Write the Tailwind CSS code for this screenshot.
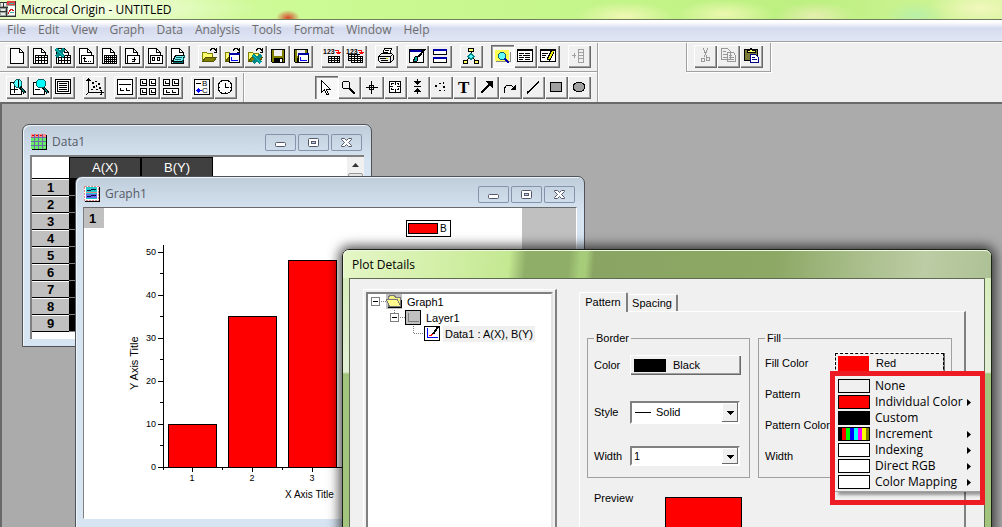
<!DOCTYPE html>
<html lang="en">
<head>
  <meta charset="UTF-8" />
  <meta name="viewport" content="width=device-width, initial-scale=1.0" />
  <title>Microcal Origin - UNTITLED</title>
  <script src="https://cdn.jsdelivr.net/npm/@tailwindcss/browser@4"></script>
</head>
<body class="h-screen overflow-hidden flex flex-col bg-[#f0f0f0] text-black font-['Open_Sans','Noto_Sans',sans-serif] text-[12px]">

  <svg class="hidden">
    <symbol id="min" viewBox="0 0 31 17"><rect x="10.5" y="8.5" width="10" height="4" rx="1" fill="#fff" stroke="#54586e" /></symbol>
    <symbol id="max" viewBox="0 0 31 17">
      <rect x="10.5" y="4.5" width="10" height="8" rx="1" fill="#fff" stroke="#54586e" />
      <rect x="13.5" y="7.5" width="4" height="2" fill="#c3d1e0" stroke="#54586e" />
    </symbol>
    <symbol id="close" viewBox="0 0 31 17">
      <path d="M10.5 4.5h3l2 2 2-2h3v1l-3 3 3 3v1h-3l-2-2-2 2h-3v-1l3-3-3-3z" fill="#fff" stroke="#54586e" />
    </symbol>
  </svg>

  <!-- title bar -->
  <header class="h-5 shrink-0 flex items-center gap-[5px] border-b border-[#6f7d5c] bg-[radial-gradient(ellipse_12px_8px_at_288px_18px,#d8472c,transparent),radial-gradient(ellipse_170px_24px_at_90px_8px,#f8ffe8,transparent),radial-gradient(ellipse_50px_14px_at_625px_16px,#f0f8b4,transparent),radial-gradient(ellipse_50px_14px_at_725px_14px,#ecf8b0,transparent),radial-gradient(ellipse_40px_14px_at_815px_16px,#e6eeb0,transparent),radial-gradient(ellipse_30px_14px_at_915px_16px,#b8f0a8,transparent),radial-gradient(ellipse_50px_20px_at_980px_8px,#f2f8bc,transparent),linear-gradient(90deg,#d8f8a8,#ccfa94_30%,#c4f58a_60%,#bcf080_80%,#d4f49c)]">
    <svg class="w-4 h-5" viewBox="0 0 16 20" shape-rendering="crispEdges">
      <rect y="2" width="15" height="14" fill="#9aa49a" />
      <path d="M7 1h8v4H7z" fill="#e04040" /><path d="M8 6h7v9H8z" fill="#fff" />
      <path d="M1 3h2v3H1zM4 3h2v3H4zM1 9h4v2H1zM1 13h4v2H1z" fill="#e8ece8" />
      <path d="M0 2.5h7M0 7.5h8M3.5 2v5M6.5 8v8M15.5 1v15M0 16.5h16M0 11.5h6" stroke="#333" fill="none" />
      <path d="M8 14l3-5 3 2" stroke="#d02020" fill="none" /><path d="M9 3.5h5M10 12.5h4" stroke="#40b0a0" />
    </svg>
    <h1>Microcal Origin - UNTITLED</h1>
  </header>

  <nav class="h-[22px] shrink-0 flex items-center gap-3 pl-[7px] pb-[2px] text-[#6d6d6d] border-b border-[#a0a0a0] bg-linear-to-b from-white from-10% via-[#d5dbee] via-40% to-[#e2e7f6]">
    <button>File</button><button>Edit</button><button>View</button><button>Graph</button><button>Data</button>
    <button>Analysis</button><button>Tools</button><button>Format</button><button>Window</button><button>Help</button>
  </nav>

  <!-- toolbars -->
  <section class="h-[60px] shrink-0 flex items-start border-t border-white">
    <div class="w-[598px] h-[60px] border-r border-[#a0a0a0] shadow-[1px_0_#fff]">
      <div id="bar1" class="h-[29px] flex gap-2 pt-[2px] pl-[6px] border-b border-[#a0a0a0]"></div>
      <div class="h-[30px] flex border-t border-white">
        <div id="bar2" class="w-[244px] h-full flex gap-2 pt-[3px] pl-[6px] border-r border-[#a0a0a0]"></div>
        <div id="bar3" class="flex pt-[3px] pl-[70px] border-l border-white"></div>
      </div>
    </div>
    <div id="bar4" class="ml-[88px] h-[29px] w-[85px] flex pt-[2px] pl-[7px] border-x border-b border-[#a0a0a0] shadow-[1px_1px_#fff,inset_1px_0_#fff]"></div>
  </section>

  <main class="relative flex-1 overflow-hidden bg-[#ababab] border-t-2 border-l-2 border-[#696969]">

    <!-- worksheet -->
    <section class="absolute left-[20px] top-[20px] w-[350px] h-[223px] flex flex-col px-[7px] pb-[7px] border border-[#4f5358] rounded-t-[7px] bg-linear-to-b from-[#bfccda] to-[#d7e4f2] to-[36px] shadow-[inset_1px_1px_#eef4fa]">
      <div class="h-[30px] shrink-0 flex items-center gap-[2px] pt-[4px] pr-[2px]">
        <svg class="w-[18px] h-[18px]" viewBox="0 0 18 18" shape-rendering="crispEdges">
          <path d="M2 2h15v15H2z" fill="#000" /><path d="M1 1h15v15H1z" fill="#fff" />
          <path d="M1 1h15v3H1z" fill="#f88" /><path d="M2 2h2v1H2zM6 2h2v1H6zM10 2h2v1h-2z" fill="#d00" />
          <path d="M1 5h15v11H1z" fill="#6e6" />
          <path d="M4.5 1v15M8.5 1v15M12.5 1v15M1 4.500h15M1 8.5h15M1 12.5h15" stroke="#6a6aa8" />
        </svg>
        <h2 class="flex-1 pl-[2px] text-[#555b66]">Data1</h2>
        <button aria-label="Minimize" class="w-[31px] h-[17px] rounded-[2px] shadow-[inset_0_0_0_1px_#8494ac]"><svg class="w-[31px] h-[17px]"><use href="#min" /></svg></button>
        <button aria-label="Maximize" class="w-[31px] h-[17px] rounded-[2px] shadow-[inset_0_0_0_1px_#8494ac]"><svg class="w-[31px] h-[17px]"><use href="#max" /></svg></button>
        <button aria-label="Close" class="w-[31px] h-[17px] rounded-[2px] shadow-[inset_0_0_0_1px_#8494ac]"><svg class="w-[31px] h-[17px]"><use href="#close" /></svg></button>
      </div>
      <div class="flex-1 flex justify-between overflow-hidden bg-white border-t-2 border-l-2 border-[#808080]">
        <table class="self-start w-[181px] table-fixed border-separate border-spacing-0 font-['Liberation_Sans',Arial,sans-serif]">
          <thead>
            <tr class="h-[20px] text-[13px] text-white">
              <td class="w-[37px] border-b border-black"></td>
              <th class="p-0 bg-[#404040] border border-black font-normal">A(X)</th>
              <th class="p-0 bg-[#404040] border border-black font-normal">B(Y)</th>
            </tr>
          </thead>
          <tbody id="rows"></tbody>
        </table>
        <div class="w-[17px] bg-[#f0f0f0] flex flex-col items-center">
          <button aria-label="Scroll up" class="h-[16px] w-full flex items-center justify-center"><svg class="w-[7px] h-[4px]" viewBox="0 0 7 4"><path d="M3.5 0L7 4H0z" fill="#333" /></svg></button>
          <div class="w-[15px] h-[60px] bg-[#e4e4e4] border border-[#999] rounded-[2px]"></div>
        </div>
      </div>
    </section>

    <!-- graph -->
    <section class="absolute left-[73px] top-[72px] w-[510px] h-[353px] flex flex-col px-[7px] pb-[7px] border border-[#4f5358] rounded-t-[7px] bg-linear-to-b from-[#bfccda] to-[#d7e4f2] to-[36px] shadow-[inset_1px_1px_#eef4fa]">
      <div class="h-[30px] shrink-0 flex items-center gap-[2px] pt-[4px] pr-[2px]">
        <svg class="w-[18px] h-[18px]" viewBox="0 0 18 18" shape-rendering="crispEdges">
          <path d="M2 2h15v15H2z" fill="#000" /><path d="M1 1h15v15H1z" fill="#fff" />
          <path d="M1.5 1.5h14v14h-14z" stroke="#d88" stroke-dasharray="2 1" fill="none" />
          <path d="M3 2h11v12H3z" fill="#2cc" /><path d="M3 9h11v4H3z" fill="#66e" />
          <path d="M4 5.5h3l2-1h4M4 11.5h3l2-1h4" stroke="#013" fill="none" /><path d="M3 7.5h11" stroke="#d88" />
        </svg>
        <h2 class="flex-1 pl-[2px] text-[#555b66]">Graph1</h2>
        <button aria-label="Minimize" class="w-[31px] h-[17px] rounded-[2px] shadow-[inset_0_0_0_1px_#8494ac]"><svg class="w-[31px] h-[17px]"><use href="#min" /></svg></button>
        <button aria-label="Maximize" class="w-[31px] h-[17px] rounded-[2px] shadow-[inset_0_0_0_1px_#8494ac]"><svg class="w-[31px] h-[17px]"><use href="#max" /></svg></button>
        <button aria-label="Close" class="w-[31px] h-[17px] rounded-[2px] shadow-[inset_0_0_0_1px_#8494ac]"><svg class="w-[31px] h-[17px]"><use href="#close" /></svg></button>
      </div>
      <div class="flex-1 mb-[2px] overflow-hidden bg-[#c0c0c0] border border-t-[#696969] border-l-[#808080] border-white">
        <svg class="w-[438px] h-full bg-white font-['Liberation_Sans',Arial,sans-serif]" viewBox="0 0 438 310" preserveAspectRatio="xMinYMin slice">
          <rect width="20" height="20" fill="#c0c0c0" />
          <text x="5" y="15" font-size="13" font-weight="bold">1</text>
          <g shape-rendering="crispEdges" stroke="#000" fill="red">
            <rect x="322.5" y="12.5" width="44" height="16" fill="#fff" />
            <rect x="324.5" y="15.5" width="29" height="10" />
            <rect x="84.5" y="216.5" width="48" height="43" />
            <rect x="144.5" y="108.5" width="48" height="151" />
            <rect x="204.5" y="52.5" width="48" height="207" />
            <path fill="none" d="M79.5 37v225M74 259.5h250M74 44.5h5M74 87.5h5M74 130.5h5M74 173.5h5M74 216.5h5M76 65.5h3M76 108.5h3M76 151.5h3M76 194.5h3M76 237.5h3M108.5 260v4M168.5 260v4M228.5 260v4M138.5 260v2M198.5 260v2" />
          </g>
          <g font-size="9" text-anchor="end">
            <text x="72" y="47">50</text><text x="72" y="90">40</text><text x="72" y="133">30</text>
            <text x="72" y="176">20</text><text x="72" y="219">10</text><text x="72" y="262">0</text>
          </g>
          <g font-size="9" text-anchor="middle">
            <text x="108" y="273">1</text><text x="168" y="273">2</text><text x="228" y="273">3</text>
          </g>
          <text x="356" y="24" font-size="10">B</text>
          <text x="201" y="290" font-size="10">X Axis Title</text>
          <text transform="translate(54 182) rotate(-90)" font-size="11">Y Axis Title</text>
        </svg>
      </div>
    </section>

    <!-- plot details dialog -->
    <section class="absolute left-[340px] right-[10px] top-[145px] h-[400px] flex flex-col px-[6px] border border-[#1c2416] rounded-t-[7px] bg-linear-to-b from-[#d4ecb4] via-[#e2efd6] via-[122px] to-[#a2c47c] to-[124px] shadow-[0_0_12px_3px_#000000b0]">
      <h2 class="h-[28px] -mx-[6px] pl-[8px] shrink-0 flex items-center rounded-t-[6px] border-t border-l border-[#f0f8e4] bg-[linear-gradient(95deg,#e4f6c6,#d2efa6_100px,#c4e892_165px,#8fae68_182px,#8fae68_225px,#a6cc7a_236px,#a6cc7a_242px,#8aa563_250px,#8ca864_430px,#a8bd8a_510px,#bccca4_580px,#aec196)]">Plot Details</h2>
      <div class="flex-1 flex justify-between pt-[10px] pl-[13px] pr-[18px] border border-[#5f6b50] bg-[#f0f0f0] font-['Liberation_Sans',Arial,sans-serif] text-[11px]">

        <div class="w-[194px] p-[2px] border-t border-l border-t-white border-l-white border-r-2 border-r-[#808080]">
          <ul class="h-full bg-white border-2 border-[#808080] border-r-[#e3e3e3] pl-[3px]">
            <li class="flex items-center h-4">
              <svg class="w-[33px] h-4" viewBox="0 0 33 16" shape-rendering="crispEdges">
                <path d="M.5 3.5h8v8h-8z" fill="#fff" stroke="#808080" /><path d="M2 7.5h5" stroke="#000" /><path d="M10 7.5h6" stroke="#808080" stroke-dasharray="1 1" />
                <rect x="15" width="16" height="15" fill="#c0c0c0" />
                <path d="M17.5 12.5v-9l1-2h5l1 2h5v9z" fill="#f4f080" stroke="#777" /><path d="M15.5 5.5h11l3 7h-11z" fill="#fff88c" stroke="#777" /><path d="M17 13.5h13.5v-8" stroke="#000" fill="none" />
              </svg>
              <span class="pl-[3px]">Graph1</span>
            </li>
            <li class="flex items-center h-4 pl-[19px]">
              <svg class="w-[33px] h-4" viewBox="0 0 33 16" shape-rendering="crispEdges">
                <path d="M.5 3.5h8v8h-8z" fill="#fff" stroke="#808080" /><path d="M2 7.5h5" stroke="#000" /><path d="M10 7.5h6M4.5 0v3" stroke="#808080" stroke-dasharray="1 1" />
                <rect x="15.5" y=".5" width="15" height="14" fill="#c0c0c0" stroke="#000" /><path d="M18.5 3v8.5h10" stroke="#808080" fill="none" />
              </svg>
              <span class="pl-[3px]">Layer1</span>
            </li>
            <li class="flex items-center h-4 pl-[38px]">
              <svg class="w-[33px] h-4" viewBox="0 0 33 16" shape-rendering="crispEdges">
                <path d="M4.5 0v7.5h11" stroke="#808080" stroke-dasharray="1 1" fill="none" />
                <rect x="15.5" y=".5" width="15" height="14" fill="#fff" stroke="#000" /><path d="M18.5 2v9.5h10" stroke="#00f" fill="none" />
                <path d="M20 9.5h2l2-2h2" stroke="red" fill="none" /><path d="M29 1l-5 7" stroke="#000" stroke-width="2" />
              </svg>
              <span class="ml-[1px] px-[2px] bg-[#f0f0f0]">Data1 : A(X), B(Y)</span>
            </li>
          </ul>
        </div>

        <div class="w-[387px] pt-[3px] flex flex-col">
          <div class="flex items-end h-[19px]" role="tablist">
            <button role="tab" aria-selected="true" class="w-[49px] h-[20px] -mb-[1px] relative bg-[#f0f0f0] border-t border-l border-white border-r-2 border-r-[#808080] rounded-t-[2px]">Pattern</button>
            <button role="tab" class="w-[50px] h-[17px] border-t border-white border-r-2 border-r-[#808080] rounded-t-[2px]">Spacing</button>
          </div>
          <div class="flex-1 pt-[18px] pl-[7px] border-t border-l border-white border-r-2 border-r-[#808080]">
            <div class="flex gap-2">
              <fieldset class="w-[163px] h-[148px] pl-[6px] border border-[#a0a0a0]">
                <legend class="h-4 leading-4 px-[2px]">Border</legend>
                <div class="flex items-center h-[20px] mt-[9px]">
                  <label for="bcolor" class="w-[36px]">Color</label>
                  <button id="bcolor" class="w-[111px] h-[20px] flex items-center gap-[7px] pl-1 shadow-[inset_1px_1px_#fff,inset_-1px_-1px_#696969,inset_-2px_-2px_#a0a0a0]"><span class="w-8 h-[13px] bg-black"></span>Black</button>
                </div>
                <div class="relative flex items-center h-[23px] mt-[26px]">
                  <label for="bstyle" class="w-[36px]">Style</label>
                  <select id="bstyle" class="appearance-none w-[110px] h-[23px] pl-[24px] bg-white border-2 border-[#808080] border-r-white border-b-white"><option>Solid</option></select>
                  <svg class="absolute left-[41px] w-[16px] h-[1px] pointer-events-none"><path d="M0 .5h16" stroke="#000" /></svg>
                  <svg class="absolute left-[128px] w-[16px] h-[19px] pointer-events-none" shape-rendering="crispEdges"><path d="M0 0h16v19H0z" fill="#696969" /><path d="M0 0h15v18H0z" fill="#fff" /><path d="M1 1h14v17H1z" fill="#f0f0f0" /><path d="M5 8h7L8.5 12z" /></svg>
                </div>
                <div class="relative flex items-center h-[20px] mt-[22px]">
                  <label for="bwidth" class="w-[36px]">Width</label>
                  <select id="bwidth" class="appearance-none w-[110px] h-[20px] pl-[2px] bg-white border-2 border-[#808080] border-r-white border-b-white"><option>1</option></select>
                  <svg class="absolute left-[128px] w-[16px] h-[16px] pointer-events-none" shape-rendering="crispEdges"><path d="M0 0h16v16H0z" fill="#696969" /><path d="M0 0h15v15H0z" fill="#fff" /><path d="M1 1h14v14H1z" fill="#f0f0f0" /><path d="M5 7h7L8.5 11z" /></svg>
                </div>
              </fieldset>
              <fieldset class="w-[194px] h-[148px] pl-[6px] border border-[#a0a0a0]">
                <legend class="h-4 leading-4 px-[2px]">Fill</legend>
                <div class="relative flex items-center h-[31px] mt-[2px]">
                  <label for="fcolor" class="w-[69px]">Fill Color</label>
                  <button id="fcolor" class="w-[111px] h-[23px] p-[1px] shadow-[inset_1px_1px_#fff,inset_-1px_-1px_#696969,inset_-2px_-2px_#a0a0a0]">
                    <span class="h-full flex items-center gap-[7px] pl-[2px] border border-dashed border-black"><span class="w-[31px] h-[15px] bg-[red]"></span>Red</span>
                  </button>
                  <!-- fill color popup -->
                  <div class="absolute left-[65px] top-[23px] z-10 w-[155px] h-[134px] border-5 border-[#ed1c24]">
                    <div id="menu" class="h-[116px] pt-[2px] bg-[#f0f0f0] border-b border-[#a0a0a0] shadow-[3px_3px_3px_#00000060] [clip-path:inset(0_0_-6px_0)] font-['Open_Sans','Noto_Sans',sans-serif] text-[12px]" role="menu"></div>
                  </div>
                </div>
                <div class="flex items-center h-[31px]"><label for="fpattern" class="w-[69px]">Pattern</label><select id="fpattern" class="w-[110px] h-[20px] bg-white"><option>None</option></select></div>
                <div class="flex items-center h-[31px]"><label for="fpcolor" class="w-[69px]">Pattern Color</label><select id="fpcolor" class="w-[110px] h-[20px] bg-white"><option>Black</option></select></div>
                <div class="flex items-center h-[31px]"><label for="fwidth" class="w-[69px]">Width</label><select id="fwidth" class="w-[110px] h-[20px] bg-white"><option>1</option></select></div>
              </fieldset>
            </div>
            <div class="flex pt-[19px] pl-[7px] leading-none">
              <span class="w-[71px] -mt-1">Preview</span>
              <div class="w-[77px] h-[80px] bg-[red] border border-black"></div>
            </div>
          </div>
        </div>
      </div>
    </section>
  </main>

  <script>
    // icons are drawn on the 23x23 button face
    const page = '<path d="M4.5 3.5h8l4 4v11h-12z" fill="#fff" stroke="#000"/><path d="M12.5 3.5v4h4" fill="none" stroke="#000"/>';
    const box = page + '<path d="M6.5 10.5h12v8h-12z" fill="#fff" stroke="#000"/>';
    const grid = box + '<path d="M6 12.5h12M6 15.5h12M9.5 10v8M12.5 10v8M15.5 10v8" stroke="#000"/>';
    const folder = '<path d="M4.5 16.5v-9h4l1 1h5v4" fill="#ffff70" stroke="#808000"/><path d="M4.5 16.5l3-4h11l-3 4z" fill="#808000" stroke="#555500"/><path d="M12 5.5l2-2h2l2 2M18.5 3v4h-3" fill="none" stroke="#000"/>';
    const excel = '<path d="M0 0l8 8M8 0l-8 8" stroke="#088" stroke-width="3"/><path d="M0 0l8 8" stroke="#0cc"/>';
    const plotBox = '<path d="M8.5 9.5h10v8h-10z" fill="#fff" stroke="#000"/><path d="M8 8.5h11" stroke="#00a" stroke-width="2"/><path d="M10.5 12v3.5h6" fill="none" stroke="#00f"/>';
    const floppy = '<path d="M4.5 4.5h13v13h-12l-1-1z" fill="#808000" stroke="#000"/><path d="M7 5h8v6H7z" fill="#f0f0f0"/><path d="M7 13h9v5H7z"/><path d="M13 14h2v3h-2z" fill="#fff"/>';
    // 1 2 3 as dots with a red arrow
    const ascii = '<text x="2" y="9" font-size="7" font-family="Liberation Sans" font-weight="bold">123</text><path d="M14 5.5h3v3M15 7.5h5M16 8.5h3" fill="none" stroke="red"/>';
    const table = '<path d="M7.5 11.5h11v6h-11z" fill="#fff"/><path d="M7 11.5h12M7 13.5h12M7 15.5h12M7 17.5h12M7.5 11v7M10.5 11v7M13.5 11v7M16.5 11v7M18.5 11v7" fill="none" stroke="#000"/>';
    const zoomPage = '<path d="M4.5 6.5h8l3 3v9h-11z" fill="#fff" stroke="#000"/><path d="M14 11l5 6" stroke="#000" stroke-width="3"/><path d="M15 12l4 5" stroke="#088"/>';
    const panel = '<path d="M3.5 3.5h15v15h-15z" fill="#fff" stroke="#000"/>';
    const L = (x, y) => `<path d="M${x}.5 ${y}v2.5h3" fill="none" stroke="#000"/>`;
    const R = (x, y, w, h) => `<path d="M${x}.5 ${y}.5h${w}v${h}h-${w}z" fill="#fff" stroke="#000"/>`;

    const icons = {
      'New project': '<path d="M4.5 3.5h9l4 4v11h-13z" fill="#fff" stroke="#000"/><path d="M13.5 3.5v4h4" fill="none" stroke="#000"/>',
      'New worksheet': grid,
      'New Excel': grid + `<g transform="translate(4 4)">${excel}</g>`,
      'New graph': box + '<path d="M9.5 12v4.5h2M8 13.5h3M13 16.5h1M15 16.5h1" fill="none" stroke="#000"/>',
      'New matrix': box + '<path d="M6 12.5h12M6 14.5h12M6 16.5h12M8.5 10v8M10.5 10v8M12.5 10v8M14.5 10v8M16.5 10v8" stroke="#000"/>',
      'New function': box + '<path d="M14 12.5h-1v4h-2M11 14.5h4" fill="none" stroke="#000"/>',
      'New layout': box + '<path d="M8.5 12.5h2v3h-2zM13.5 12.5h2v3h-2z" fill="none" stroke="#000"/>',
      'New notes': page + '<path d="M8.5 10.5h9l-2 6h-10z" fill="#7ee" stroke="#000"/><path d="M6 17.5h9l3-7M9 12.5h6M8 14.5h6" fill="none" stroke="#066"/>',
      'Open': folder,
      'Open template': folder + plotBox,
      'Open Excel': folder + `<g transform="translate(9 10)">${excel}</g>`,
      'Save': floppy,
      'Save template': floppy + plotBox,
      'Import ASCII': ascii + table,
      'Import multiple': ascii + table + '<path d="M4 9.5h12M4 11.5h3M4 13.5h3M4 15.5h3M4.5 9v7M7.5 9v2M10.5 9v2M13.5 9v2" fill="none" stroke="#000"/>',
      'Print': '<path d="M7.5 9.5l2-6h7l-2 6" fill="#fff" stroke="#000"/><path d="M10 5.5h4M9 7.5h4" stroke="#000"/><path d="M3.5 11.5l3-3h10l2 2v4l-3 3h-10l-2-2z" fill="#eee" stroke="#000"/><path d="M4 11.5h11l3-2M15.5 12v5M6 15.5h7M5 13.5h6" fill="none" stroke="#000"/><path d="M11 13.5h2" stroke="#cc0"/>',
      'Refresh': '<path d="M3.5 4.5h14v13h-14z" fill="#fff" stroke="#000"/><path d="M4 6h13" stroke="#00a" stroke-width="2"/><path d="M19 4l-7 8" stroke="#000" stroke-width="2"/><path d="M12 11l-1 5-4 1 2-5z" fill="#0aa" stroke="#000"/>',
      'Duplicate': '<path d="M4.5 4.5h13v5h-13zM4.5 12.5h13v5h-13z" fill="#fff" stroke="#000"/><path d="M4 5h14M4 13h14" stroke="#00a" stroke-width="2"/>',
      'Project explorer': '<path d="M11.500 6v5M9 13l-3 3M13 13l3 3" stroke="#000"/><path d="M8.5 3.5h5v3h-5zM3.5 15.5h4v3h-4zM14.5 15.5h4v3h-4z" fill="#ff6" stroke="#000"/><path d="M11 8.500l3 3-3 3-3-3z" fill="#5ff" stroke="#088"/>',
      'Results log': '<path d="M4 5h14v11H4z" fill="#ffff50"/><path d="M5 16.5h14v-10" fill="none" stroke="#888"/><circle cx="11" cy="11" r="3.5" fill="#6ff" stroke="#068"/><path d="M14 14l4 4" stroke="#00a" stroke-width="2"/>',
      'Script window': '<path d="M3.5 4.5h15v12h-15z" fill="#fff" stroke="#000"/><path d="M3 5h16" stroke="#000" stroke-width="2"/><path d="M5 8.5h5M11 8.5h5M5 10.5h3M9 10.5h7M5 12.5h5M11 12.5h5M5 14.5h4M11 14.5h5" stroke="#000"/>',
      'Code window': '<path d="M3.5 4.5h15v12h-15z" fill="#fff" stroke="#000"/><path d="M3 5h16" stroke="#000" stroke-width="2"/><path d="M5 8.5h6M5 10.5h4M5 12.5h3" stroke="#000"/><path d="M16 6l-5 9" stroke="#000" stroke-width="4"/><path d="M16 6l-4 8" stroke="#ee0" stroke-width="2"/>',
      'Add column': '<path d="M4 10.5h4M6.5 8v5M10.5 4.5h5v13h-5zM10 7.5h5M10 10.5h5M10 13.5h5" fill="none" stroke="#a0a0a0"/>',
      'Zoom in': zoomPage + '<circle cx="12" cy="7.5" r="4" fill="#5ff" stroke="#066"/><path d="M5 13.5h7M8.5 10v7M12 4v7" stroke="#000"/>',
      'Zoom out': zoomPage + '<circle cx="12" cy="7.5" r="4.5" fill="#0ff" stroke="#066"/><path d="M6 13.5h5" stroke="#000"/>',
      'Whole page': R(3, 3, 15, 14) + R(5, 5, 11, 10) + '<path d="M7 7.5h8M7 9.5h8M7 11.5h8M7 13.5h8" stroke="#000"/>',
      'Rescale': '<path d="M5.5 3v13.5h15M3.5 5l2-2 2 2M17.500 14l2 2.500-2 2.500M5 17l-2 2" fill="none" stroke="#000"/><path d="M9 6h2v2H9zM12 5h2v1h-2zM15 7h2v2h-2zM10 10h2v2h-2zM13 9h1v2h-1zM16 11h2v2h-2zM8 13h2v1H8zM13 13h2v1h-2z"/>',
      'Extract layers': panel + '<path d="M5 8.5h12" stroke="#000"/>' + L(6, 12) + L(12, 12),
      'Extract graphs': R(3, 3, 6, 6) + R(12, 3, 6, 6) + R(3, 12, 6, 6) + R(12, 12, 6, 6) + L(5, 5) + L(14, 5) + L(5, 14) + L(14, 14),
      'Merge': R(3, 3, 6, 6) + R(12, 3, 6, 6) + R(3, 12, 15, 6) + L(5, 5) + L(14, 5) + L(6, 14) + L(12, 14),
      'Legend': panel + '<path d="M5 7.5h5" stroke="#000"/><path d="M5 14.5h6M7.5 12v5M6 13.5h3M6 15.5h3" stroke="#00f"/><text x="11" y="10" font-size="8" font-family="Liberation Sans">B</text><text x="11" y="17" font-size="8" font-family="Liberation Sans">C</text>',
      'Date': '<circle cx="11" cy="11" r="7" fill="#fff" stroke="#000"/><path d="M11.5 7v4.5h3M11.5 4v1M11.5 16v1M5 11.5h1M16 11.5h1" fill="none" stroke="#000"/>',
      'Pointer': '<path d="M6.5 4.5v12l3-3 2 5h2l-2-5h4z" fill="#fff" stroke="#000"/>',
      'Zoom tool': '<circle cx="8" cy="9" r="4" fill="none" stroke="#000"/><path d="M11 12l6 6" stroke="#000" stroke-width="2"/>',
      'Screen reader': '<path d="M10.500 5v13M5 11.5h12M8.5 9.5h4v4h-4z" fill="none" stroke="#000"/>',
      'Data reader': R(5, 5, 11, 11) + '<path d="M11 5v4M11 13v3M5 10.5h4M13 10.5h3M7.5 9V7.500h2M14.500 9V7.500h-2M7.500 12v1.500h2M14.500 12v1.500h-2" fill="none" stroke="#000"/>',
      'Data selector': '<path d="M10.5 3v5M10.5 13v5M7 10.5h7" stroke="#000"/><path d="M7 5h7l-3.5 4zM7 16h7l-3.5-4z"/>',
      'Draw data': '<path d="M5 9h2v2H5zM9 7h2v1H9zM9 14h2v1H9zM13 6h1v2h-1zM13 10h2v2h-2zM14 14h1v1h-1z"/>',
      'Text': '<text x="5" y="17" font-size="17" font-weight="bold" font-family="Liberation Serif">T</text>',
      'Arrow': '<path d="M5 17l8-8" stroke="#000" stroke-width="2"/><path d="M17 5v8l-8-8z"/>',
      'Curved arrow': '<path d="M5 17v-4l3-4h4l2 2" fill="none" stroke="#000"/><path d="M17 8v6h-6z"/>',
      'Line': '<path d="M5 17L17 6" stroke="#000" stroke-width="1.5"/>',
      'Rectangle': '<path d="M5.5 6.5h11v9h-11z" fill="#a0a0a0" stroke="#000"/>',
      'Ellipse': '<ellipse cx="11" cy="11" rx="6" ry="4.5" fill="#a0a0a0" stroke="#000"/>',
      'Cut': '<path d="M9 3l4 9M14 3l-4 9" stroke="#999"/><circle cx="9" cy="15" r="2" fill="none" stroke="#999"/><circle cx="14" cy="14" r="2" fill="none" stroke="#999"/>',
      'Copy': '<path d="M4.5 3.5h6l3 3v8h-9zM10.5 7.5h6l2 3v6h-8z" fill="#f0f0f0" stroke="#999"/><path d="M6 6.5h3M6 9.5h4M6 12.5h4M12 10.5h3M12 12.5h5M12 14.5h5" stroke="#999"/>',
      'Paste': '<path d="M4.5 4.5h13v11h-13z" fill="#7c7c38" stroke="#000"/><path d="M7 5.5h2l2-2 2 2h2v2H7z" fill="#ff6" stroke="#000"/><path d="M10.5 9.5h5l3 3v5h-8z" fill="#fff" stroke="#008"/><path d="M12 12.5h3M12 14.5h5" stroke="#008"/>'
    };

    const bars = {
      bar1: [
        ['New project', 'New worksheet', 'New Excel', 'New graph', 'New matrix', 'New function', 'New layout', 'New notes'],
        ['Open', 'Open template', 'Open Excel', 'Save', 'Save template'],
        ['Import ASCII', 'Import multiple'], ['Print'], ['Refresh', 'Duplicate'], ['Project explorer'],
        ['Results log', 'Script window', 'Code window'], ['Add column']
      ],
      bar2: [['Zoom in', 'Zoom out', 'Whole page'], ['Rescale'], ['Extract layers', 'Extract graphs', 'Merge'], ['Legend', 'Date']],
      bar3: [['Pointer', 'Zoom tool', 'Screen reader', 'Data reader', 'Data selector', 'Draw data', 'Text', 'Arrow', 'Curved arrow', 'Line', 'Rectangle', 'Ellipse']],
      bar4: [['Cut', 'Copy', 'Paste']]
    };
    const pressed = ['Results log', 'Pointer'];
    const up = 'w-[23px] h-[23px] shadow-[inset_1px_1px_#fff,inset_-1px_-1px_#696969,inset_-2px_-2px_#a0a0a0]';
    const down = 'w-[23px] h-[23px] bg-[#f8f8f8] shadow-[inset_1px_1px_#696969,inset_2px_2px_#a0a0a0,inset_-1px_-1px_#fff]';

    for (const id in bars) {
      document.getElementById(id).innerHTML = bars[id].map(group =>
        '<div class="flex">' + group.map(name =>
          `<button aria-label="${name}" class="${pressed.includes(name) ? down : up}"><svg class="w-[23px] h-[23px]" viewBox="0 0 23 23" shape-rendering="crispEdges">${icons[name]}</svg></button>`
        ).join('') + '</div>').join('');
    }

    document.getElementById('rows').innerHTML = [1, 2, 3, 4, 5, 6, 7, 8, 9].map(n =>
      `<tr class="h-[17px]"><th class="h-[17px] p-0 leading-[15px] text-[13px] bg-[#c0c0c0] border-t border-t-white border-b border-b-black">${n}</th><td class="p-0 bg-black border-b border-[#808080]"></td><td class="p-0 bg-black border-b border-[#808080]"></td></tr>`
    ).join('');

    // label, swatch, has submenu
    const menu = [
      ['None', 'bg-[#f0f0f0]', false],
      ['Individual Color', 'bg-[red]', true],
      ['Custom', 'bg-black', false],
      ['Increment', 'bg-[linear-gradient(90deg,#000_0_3px,red_3px_7px,lime_7px_11px,blue_11px_15px,cyan_15px_19px,magenta_19px_23px,yellow_23px_27px,olive_27px)]', true],
      ['Indexing', 'bg-white', true],
      ['Direct RGB', 'bg-white', true],
      ['Color Mapping', 'bg-white', true]
    ];
    document.getElementById('menu').innerHTML = menu.map(([label, swatch, sub]) =>
      `<button role="menuitem" class="w-full h-4 flex items-center pl-[3px] pr-[9px] text-left leading-4"><span class="w-8 h-[14px] mr-[5px] border border-black ${swatch}"></span><span class="flex-1 whitespace-nowrap">${label}</span>${sub ? '<svg class="w-1 h-[7px]" viewBox="0 0 4 7"><path d="M0 0l4 3.5L0 7z"/></svg>' : ''}</button>`
    ).join('');
  </script>
</body>
</html>
